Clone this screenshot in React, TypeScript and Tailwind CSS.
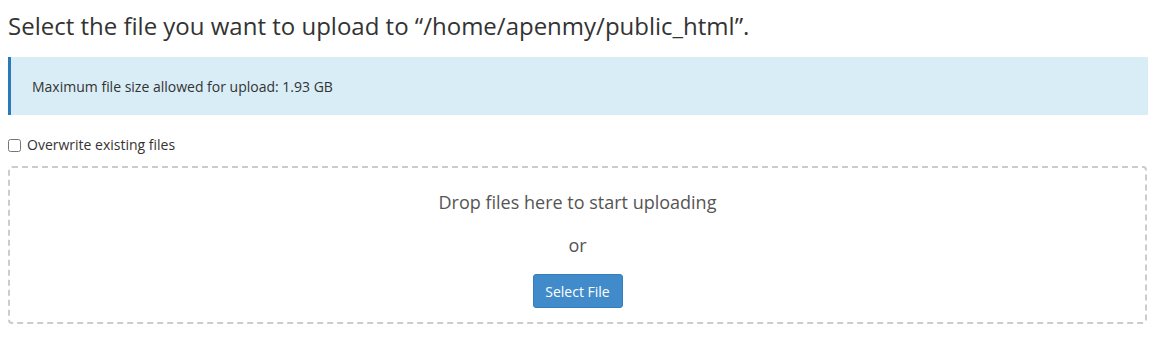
export default function App() {
    return (
        <div className="px-2 pt-[9px] text-[#333] font-['Open_Sans',sans-serif]">
            <h1 className="text-[24px] leading-[34px] font-normal">Select the file you want to upload to “/home/apenmy/public_html”.</h1>
            <div className="mt-[14px] mr-[6px] h-[58px] flex items-center bg-[#d9edf7] border-l-[3px] border-[#2a7ab9] pl-[21px] text-[14px]">
                Maximum file size allowed for upload: 1.93 GB
            </div>
            <label className="mt-[20px] flex items-center gap-[6px] text-[14px] leading-[20px]">
                <input type="checkbox" className="size-[13px] m-0" />
                Overwrite existing files
            </label>
            <div className="mt-[11px] mr-[7px] h-[158px] border-2 border-dashed border-[#ccc] rounded-[4px] flex flex-col items-center text-[#555]">
                <div className="mt-[22px] text-[18px] leading-[24px]">Drop files here to start uploading</div>
                <div className="mt-[19px] text-[18px] leading-[24px]">or</div>
                <button className="mt-[17px] w-[90px] h-[34px] bg-[#428bca] border border-[#357ebd] rounded-[3px] text-white text-[14px]">Select File</button>
            </div>
        </div>
    )
}
